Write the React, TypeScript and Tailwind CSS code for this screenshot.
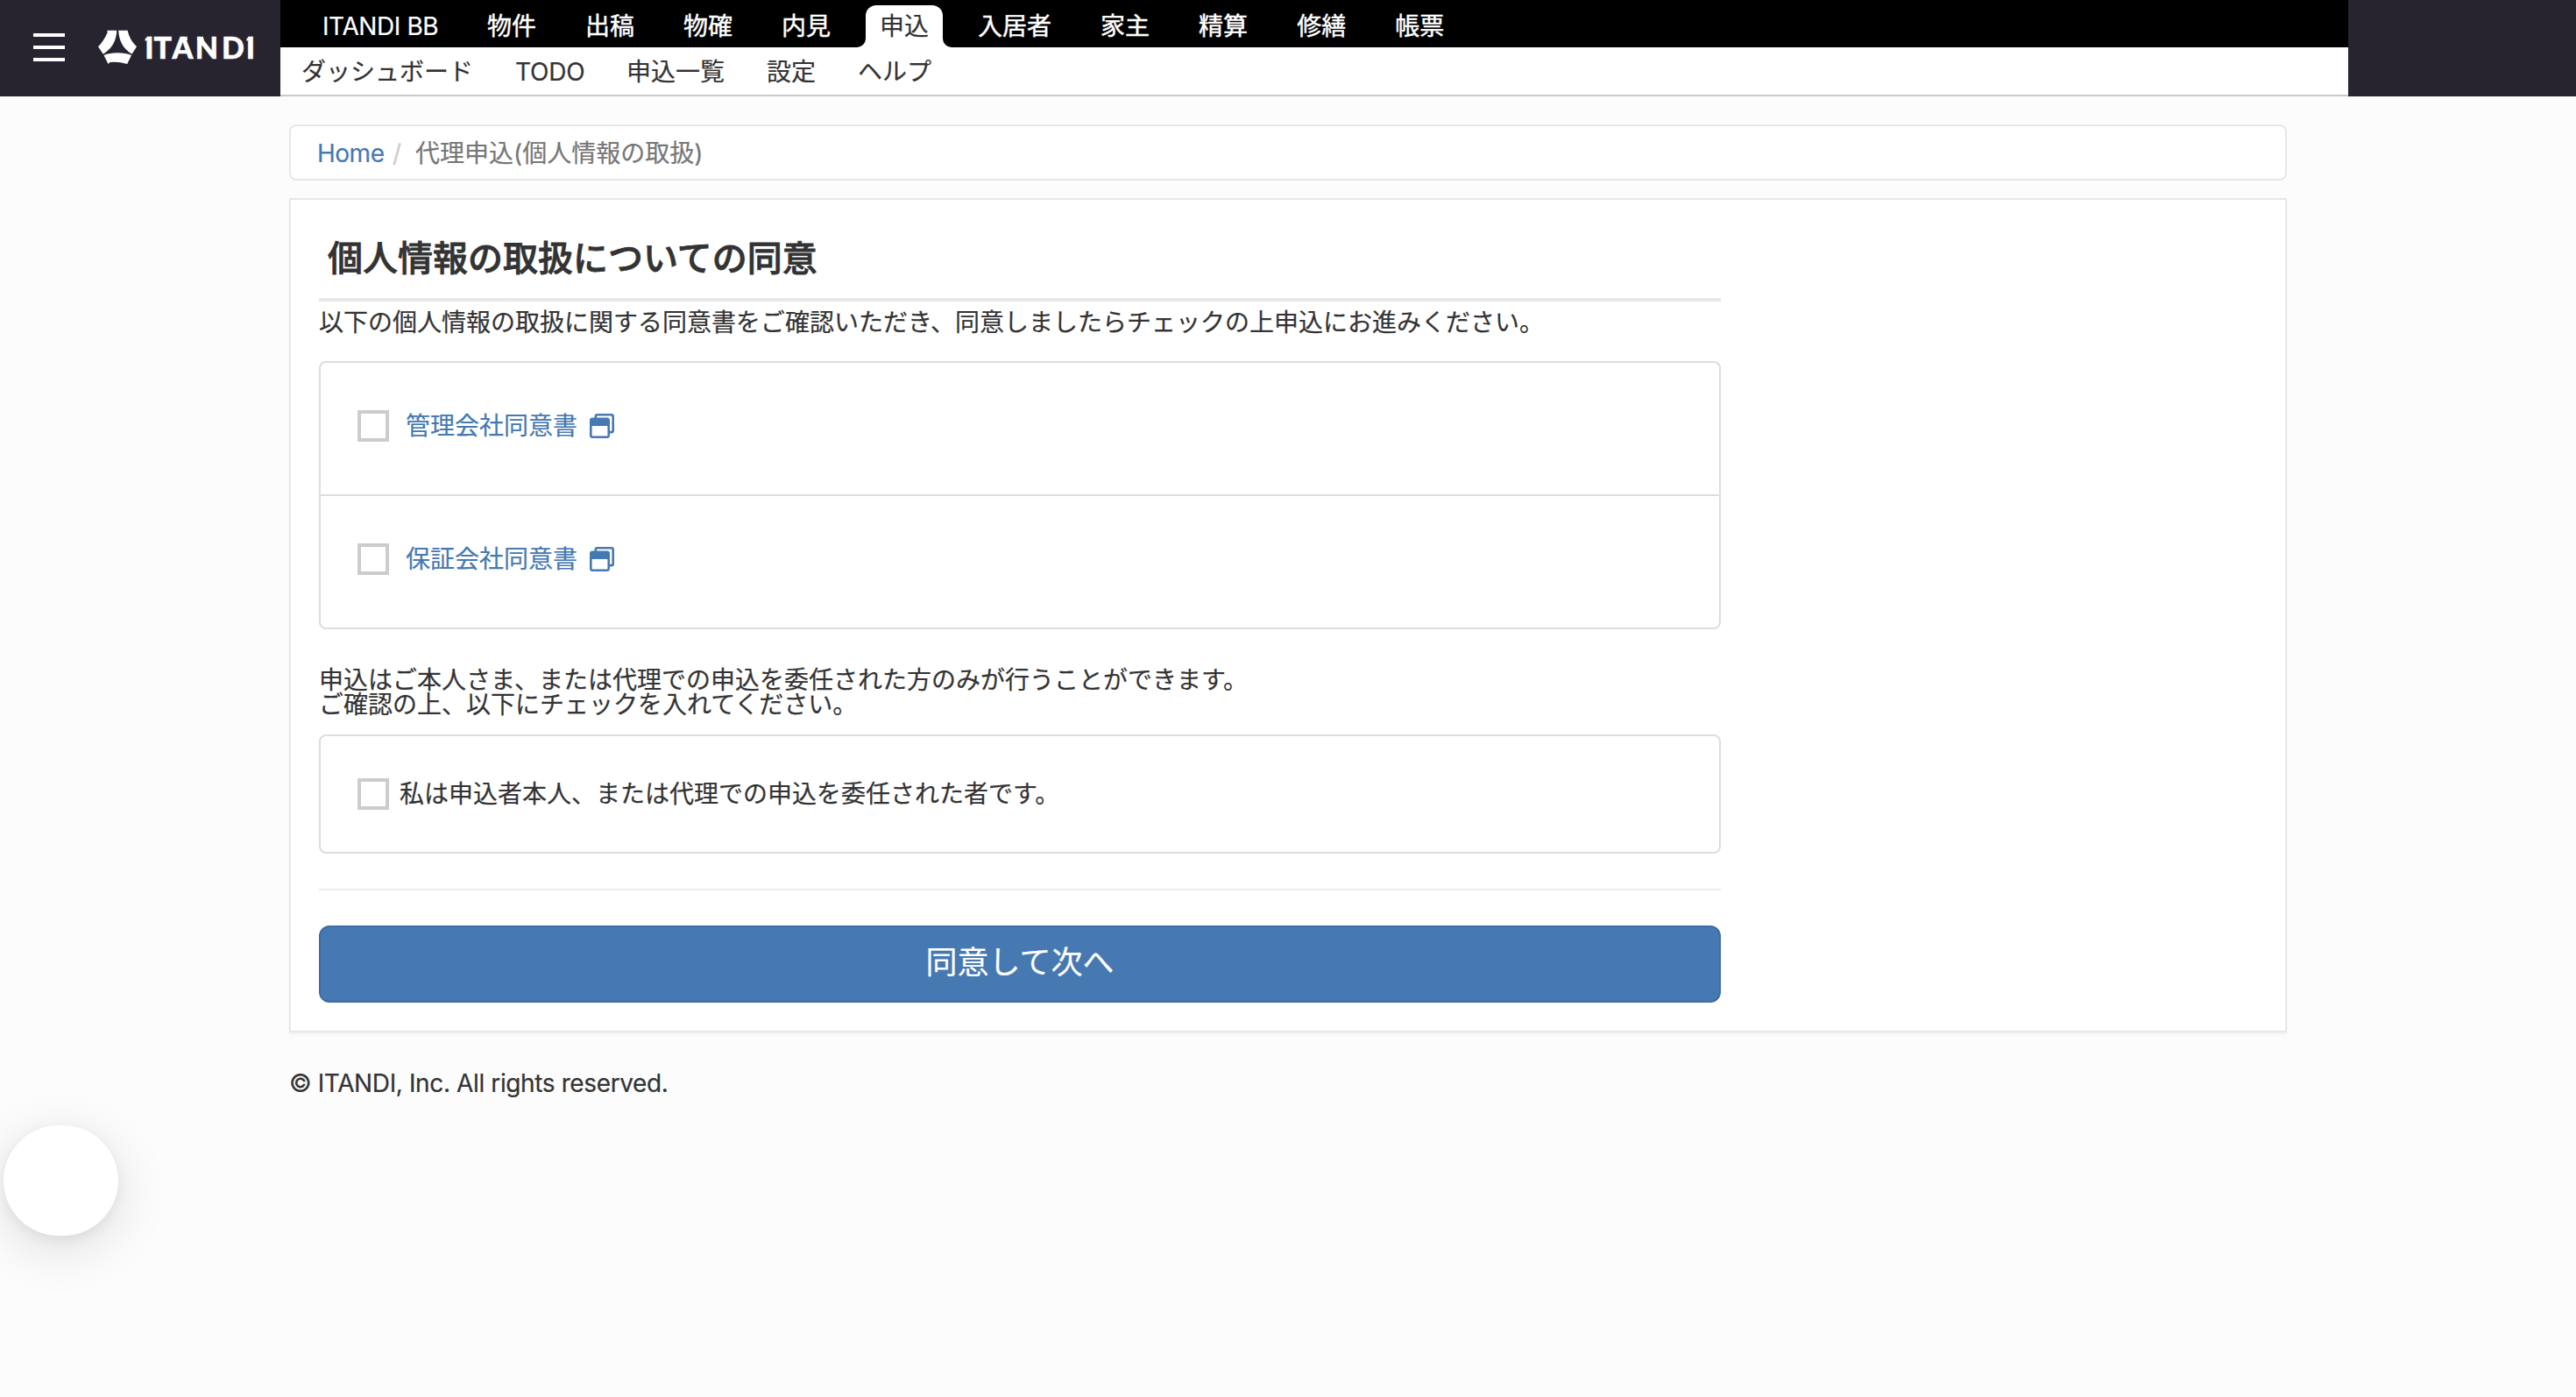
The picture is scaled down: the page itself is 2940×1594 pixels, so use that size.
import type { ReactNode } from "react";

const services = ["ITANDI BB", "物件", "出稿", "物確", "内見", "申込", "入居者", "家主", "精算", "修繕", "帳票"];
const pages = ["ダッシュボード", "TODO", "申込一覧", "設定", "ヘルプ"];

function Logo() {
  return (
    <svg className="ml-[38px] h-[40px] w-[178px] shrink-0" viewBox="112 34 178 40" fill="#fff" aria-label="ITANDI">
      <path d="M122.5 34.8H133.2C133 44 129.5 54.500 117.800 61.800L112 53.300Q118 47.500 122.500 37.500Z" />
      <path d="M135.200 34.800H145.600Q148 46 156 53.300L150.500 61.800C139.500 55 135.600 45 135.200 34.800Z" />
      <path d="M118.500 63C126 59.300 142 59.300 150 63L145.200 73Q134 69.700 125.500 71L123.500 73Z" />
      <path d="M167.600 43.200L172.200 41.600V46H167.600L165.700 47V43.800Z" />
      <path d="M283.200 43.200L288 41.600V46H283.200L281.500 47V43.800Z" />
      <path d="M209 42.500L213.500 41.600L214 46H208Z" />
      <path d="M225.300 43.500L231.500 41.600L233 46H225.300Z" />
      <text
        x="165.200 175.600 196.400 222.800 252.900 280.800"
        y="67.300"
        fontSize="34"
        fontWeight="900"
        stroke="#fff"
        strokeWidth="0.5"
        className="font-['Lato',sans-serif]"
      >
        ITANDI
      </text>
    </svg>
  );
}

function WindowIcon() {
  return (
    <svg className="ml-[14px] mt-[-1px] size-[28px]" viewBox="0 0 28 28" fill="none" stroke="#4679b2" strokeWidth="2.6">
      <path d="M6.800 5V3.200Q6.800 1.300 8.700 1.300H24.800Q26.700 1.300 26.700 3.200V19.200Q26.700 21.100 24.800 21.100H23" />
      <rect x="1.300" y="5.700" width="20.400" height="21" rx="2" />
      <path d="M1.300 6.500H21.700V14H1.300Z" fill="#4679b2" stroke="none" />
    </svg>
  );
}

function Checkbox() {
  return <span className="size-9 shrink-0 border-4 border-[#ccc] bg-white" />;
}

function Consent({ children }: { children: ReactNode }) {
  return (
    <div className="flex h-[152px] items-start pt-[54px] pl-[42px] last:h-[150px]">
      <Checkbox />
      <a className="ml-[19px] flex h-9 items-center text-[#4679b2]">
        {children}
        <WindowIcon />
      </a>
    </div>
  );
}

function ActiveTab({ label }: { label: string }) {
  return (
    <span className="relative -mx-4 mt-[6px] flex h-12 items-center rounded-t-[12px] bg-white px-4 text-[#333]">
      {label}
      <svg className="absolute bottom-0 -left-[10px] size-[10px]" viewBox="0 0 10 10" fill="#fff">
        <path d="M10 0A10 10 0 0 1 0 10H10Z" />
      </svg>
      <svg className="absolute -right-[10px] bottom-0 size-[10px]" viewBox="0 0 10 10" fill="#fff">
        <path d="M0 0A10 10 0 0 0 10 10H0Z" />
      </svg>
    </span>
  );
}

export default function App() {
  return (
    <div className="relative h-[1594px] w-[2940px] overflow-hidden bg-[#fcfcfc] font-['Inter','Noto_Sans_CJK_JP',sans-serif] text-[28px] leading-[28px] text-[#333] [-webkit-text-stroke:0.2px]">
      <header className="flex h-[110px] bg-[#27242f]">
        <div className="flex w-[320px] items-start pt-[34px] pl-[38px]">
          <div className="flex flex-col gap-[10px] pt-1">
            <span className="h-1 w-9 bg-white" />
            <span className="h-1 w-9 bg-white" />
            <span className="h-1 w-9 bg-white" />
          </div>
          <Logo />
        </div>
        <div className="w-[2360px] border-b-2 border-[#c8c8d0] bg-white">
          <nav className="flex h-[54px] gap-14 bg-black pl-12 text-white">
            {services.map((s) =>
              s === "申込" ? (
                <ActiveTab key={s} label={s} />
              ) : (
                <span
                  key={s}
                  className={
                    s === "ITANDI BB"
                      ? "flex w-[132px] items-center pt-[6px] tracking-[-0.4px] whitespace-nowrap"
                      : "flex items-center pt-[6px] [-webkit-text-stroke:0.45px]"
                  }
                >
                  {s}
                </span>
              ),
            )}
          </nav>
          <nav className="flex h-[54px] items-center gap-12 pt-[2px] pl-6">
            {pages.map((p) => (
              <span key={p} className={p === "TODO" ? "w-[79px] tracking-[-0.2px]" : ""}>
                {p}
              </span>
            ))}
          </nav>
        </div>
      </header>

      <main className="ml-[330px] w-[2280px]">
        <div className="mt-8 flex h-16 items-center rounded-lg border-2 border-[#e7e7ec] bg-white pt-px pl-[30px]">
          <a className="w-[86px] tracking-[-0.5px] text-[#4679b2]">Home</a>
          <span className="w-[26px] text-[#ccc]">/</span>
          <span className="text-[#777]">代理申込(個人情報の取扱)</span>
        </div>

        <section className="mt-5 h-[952px] border-2 border-[#e7e7ec] bg-white pl-8 shadow-[0_2px_4px_rgba(0,0,0,0.05)]">
          <div className="w-[1600px]">
            <h1 className="flex h-[116px] items-center border-b-4 border-[#e7e7ec] pt-[21px] pl-[10px] text-[40px] leading-[44px] font-medium [-webkit-text-stroke:0.8px]">
              個人情報の取扱についての同意
            </h1>
            <p className="mt-[10px]">
              以下の個人情報の取扱に関する同意書をご確認いただき、同意しましたらチェックの上申込にお進みください。
            </p>
            <div className="mt-[30px] divide-y-2 divide-[#ddd] rounded-lg border-2 border-[#ddd]">
              <Consent>管理会社同意書</Consent>
              <Consent>保証会社同意書</Consent>
            </div>
            <p className="mt-[44px]">
              申込はご本人さま、または代理での申込を委任された方のみが行うことができます。
              <br />
              ご確認の上、以下にチェックを入れてください。
            </p>
            <div className="mt-5 flex h-[136px] items-start rounded-lg border-2 border-[#ddd] pt-12 pl-[42px]">
              <Checkbox />
              <span className="ml-3 flex h-9 items-center">私は申込者本人、または代理での申込を委任された者です。</span>
            </div>
            <hr className="mt-10 border-t-2 border-[#eee]" />
            <button className="mt-10 flex h-[88px] w-full items-center justify-center rounded-xl border-2 border-[#3e6ca3] bg-[#4679b2] pb-1 text-[36px] leading-[48px] text-white">
              同意して次へ
            </button>
          </div>
        </section>

        <footer className="mt-[44px] tracking-[-0.38px] whitespace-nowrap">© ITANDI, Inc. All rights reserved.</footer>
      </main>

      <div className="absolute top-[1284px] left-[4px] h-[126px] w-[131px] rounded-full bg-white shadow-[0_14px_60px_rgba(0,0,0,0.13),0_4px_14px_rgba(0,0,0,0.06)]" />
    </div>
  );
}
